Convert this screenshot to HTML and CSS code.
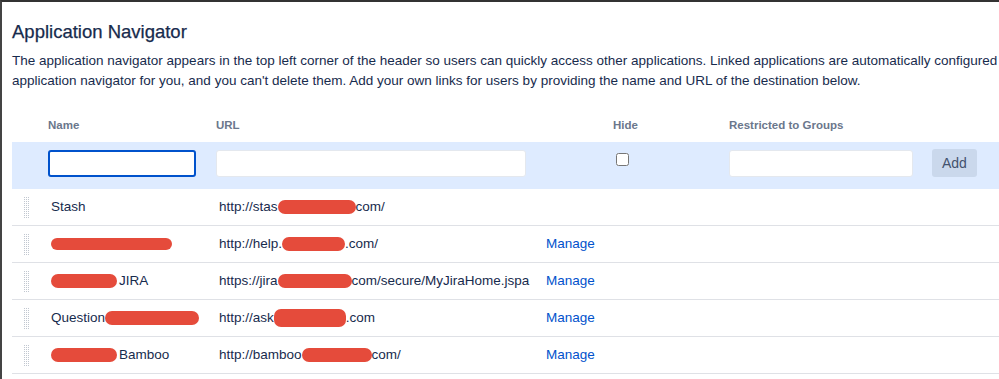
FILE: index.html
```html
<!DOCTYPE html>
<html lang="en">
<head>
    <meta charset="UTF-8">
    <meta name="viewport" content="width=device-width, initial-scale=1.0">
    <title>Application Navigator</title>
    <link rel="stylesheet" href="styles.css">
</head>
<body>
    <div class="page">
        <h1 class="title">Application Navigator</h1>
        <p class="intro">The application navigator appears in the top left corner of the header so users can quickly access other applications. Linked applications are automatically configured in the<br>application navigator for you, and you can't delete them. Add your own links for users by providing the name and URL of the destination below.</p>

        <div class="nav-table">
            <div class="row head">
                <div class="cell"></div>
                <div class="cell">Name</div>
                <div class="cell">URL</div>
                <div class="cell"></div>
                <div class="cell">Hide</div>
                <div class="cell">Restricted to Groups</div>
                <div class="cell"></div>
            </div>

            <div class="row add">
                <div class="cell"></div>
                <div class="cell"><input type="text" class="field field-name"></div>
                <div class="cell"><input type="text" class="field field-url"></div>
                <div class="cell"></div>
                <div class="cell"><input type="checkbox" class="check"></div>
                <div class="cell"><input type="text" class="field field-groups"></div>
                <div class="cell"><button class="add-btn">Add</button></div>
            </div>

            <div class="row link">
                <div class="cell"><span class="grip"></span></div>
                <div class="cell text">Stash</div>
                <div class="cell text">http://stas<span class="redact r-url1"></span>com/</div>
                <div class="cell"></div>
                <div class="cell"></div>
                <div class="cell"></div>
                <div class="cell"></div>
            </div>

            <div class="row link">
                <div class="cell"><span class="grip"></span></div>
                <div class="cell text"><span class="redact r-name2"></span></div>
                <div class="cell text">http://help.<span class="redact r-url2"></span>.com/</div>
                <div class="cell"><a href="#" class="manage">Manage</a></div>
                <div class="cell"></div>
                <div class="cell"></div>
                <div class="cell"></div>
            </div>

            <div class="row link">
                <div class="cell"><span class="grip"></span></div>
                <div class="cell text"><span class="redact r-name3"></span>JIRA</div>
                <div class="cell text">https://jira<span class="redact r-url3"></span>com/secure/MyJiraHome.jspa</div>
                <div class="cell"><a href="#" class="manage">Manage</a></div>
                <div class="cell"></div>
                <div class="cell"></div>
                <div class="cell"></div>
            </div>

            <div class="row link">
                <div class="cell"><span class="grip"></span></div>
                <div class="cell text">Question<span class="redact r-name4"></span></div>
                <div class="cell text">http://ask<span class="redact r-url4"></span>.com</div>
                <div class="cell"><a href="#" class="manage">Manage</a></div>
                <div class="cell"></div>
                <div class="cell"></div>
                <div class="cell"></div>
            </div>

            <div class="row link">
                <div class="cell"><span class="grip"></span></div>
                <div class="cell text"><span class="redact r-name5"></span>Bamboo</div>
                <div class="cell text">http://bamboo<span class="redact r-url5"></span>com/</div>
                <div class="cell"><a href="#" class="manage">Manage</a></div>
                <div class="cell"></div>
                <div class="cell"></div>
                <div class="cell"></div>
            </div>
        </div>
    </div>
</body>
</html>
```

FILE: styles.css
```css
html, body { height: 100%; }
body { margin: 0; box-sizing: border-box; border-top: 2px solid #333; border-left: 2px solid #444; overflow: hidden; background: #fff; font-family: "Liberation Sans", Arial, sans-serif; font-size: 13.5px; color: #172b4d; }
.page { width: 1100px; padding-left: 10px; }
.title { margin: 18px 0 0; font-size: 18.5px; line-height: 24px; font-weight: normal; color: #172b4d; -webkit-text-stroke: 0.25px #172b4d; }
.intro { margin: 7px 0 0; line-height: 20px; white-space: nowrap; }

.nav-table { margin-top: 21px; }
.row { display: grid; grid-template-columns: 28px 168px 330px 67px 116px 203px 1fr; }
.cell { padding-left: 8px; }
.head { padding: 5px 0 9px; font-size: 11.5px; line-height: 16px; font-weight: bold; color: #6b778c; }
.add { padding: 8px 0 12px; background: #deebff; }
.link { height: 36px; box-sizing: content-box; padding: 0; line-height: 20px; border-bottom: 1px solid #dfe1e6; align-items: center; }
.text { padding-left: 11px; }

.field { box-sizing: border-box; height: 27px; margin: 0; padding: 0 6px; background: #fff; border: 1px solid #e4e8ee; border-radius: 3px; font: inherit; outline: none; }
.field-name { width: 148px; border: 2px solid #0052cc; }
.field-url { width: 310px; }
.field-groups { width: 184px; }
.check { width: 13px; height: 13px; margin: 3px 0 0 3px; }
.add-btn { height: 28px; margin-top: -1px; padding: 0 10px; background: #cad8ec; color: #42526e; border: none; border-radius: 3px; font: inherit; font-size: 14px; cursor: pointer; }

.grip { display: block; width: 7px; height: 21px; margin-left: 3px; background: linear-gradient(90deg, #fff 50%, transparent 50%) 0 0 / 2px 2px, linear-gradient(#c1c7d0 50%, transparent 50%) 0 0 / 2px 2px; }
.manage { color: #0052cc; text-decoration: none; }

.redact { display: inline-block; height: 14px; vertical-align: -3px; background: #e54b3b; border-radius: 7px; }
.r-url1 { width: 78px; }
.r-name2 { width: 121px; height: 12px; vertical-align: -2px; }
.r-url2 { width: 63px; }
.r-name3 { width: 66px; margin-right: 2px; }
.r-url3 { width: 74px; }
.r-name4 { width: 94px; }
.r-url4 { width: 72px; height: 18px; vertical-align: -5px; }
.r-name5 { width: 66px; margin-right: 2px; }
.r-url5 { width: 70px; }
```
